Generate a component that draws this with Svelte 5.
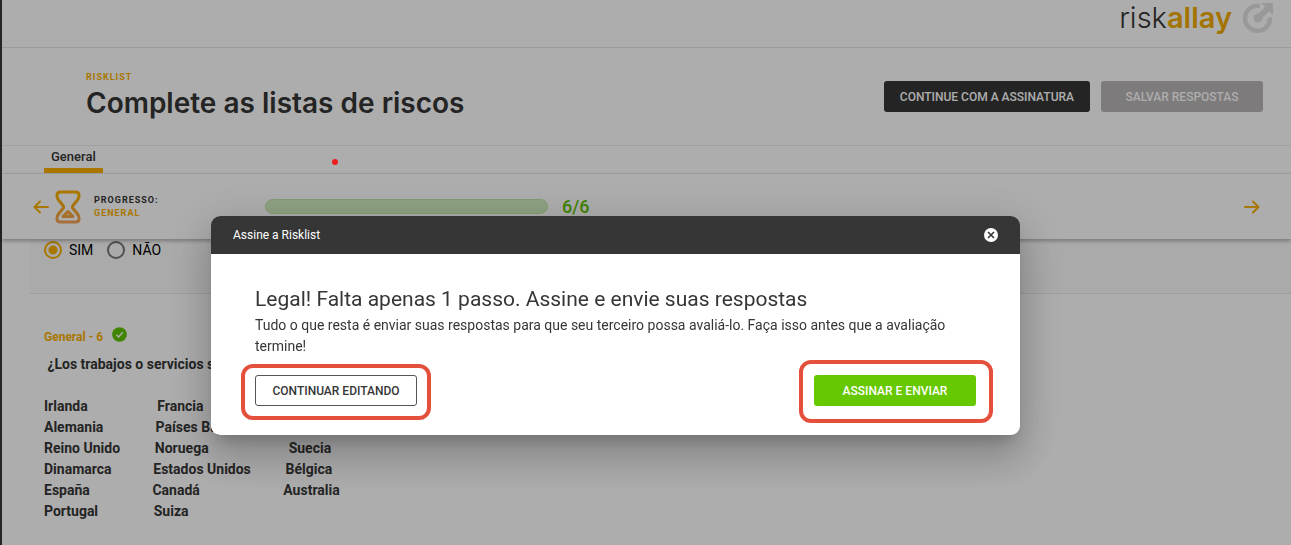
<script>
    let answer = $state("sim");
    let modalOpen = $state(true);

    // column spacing is part of the text, the way the question was typed in
    const gap = (n) => " ".repeat(n);
    const countries = [
        "Irlanda" + gap(20) + "Francia",
        "Alemania" + gap(15) + "Países Bajos",
        "Reino Unido" + gap(10) + "Noruega" + gap(23) + "Suecia",
        "Dinamarca" + gap(12) + "Estados Unidos" + gap(10) + "Bélgica",
        "España" + gap(18) + "Canadá" + gap(24) + "Australia",
        "Portugal" + gap(16) + "Suiza",
    ].join("\n");
</script>

<div class="page">
    <header class="topbar">
        <a class="logo" href="#home">
            <span>risk<b>allay</b></span>
            <svg width="32" height="32" viewBox="0 0 32 32" fill="none">
                <path
                    d="M18 4.100A12.500 12.500 0 1 0 28 15.500"
                    stroke="#e2e2e2"
                    stroke-width="4.500"
                />
                <path d="M19 1H31V13L27.200 9.200L19 17.400L14.800 13.200L23 5Z" fill="#e2e2e2" />
                <circle cx="16" cy="16" r="4.500" fill="#e2e2e2" />
            </svg>
        </a>
    </header>

    <section class="heading">
        <div>
            <div class="kicker">RISKLIST</div>
            <h1>Complete as listas de riscos</h1>
        </div>
        <div class="actions">
            <button class="btn dark">CONTINUE COM A ASSINATURA</button>
            <button class="btn muted">SALVAR RESPOSTAS</button>
        </div>
    </section>

    <nav class="tabs">
        <a class="tab" href="#general">General</a>
    </nav>

    <section class="progress">
        <button class="arrow" aria-label="Anterior">
            <svg width="16" height="14" viewBox="0 0 16 14">
                <path d="M15 7H2M7 1.500L1.500 7L7 12.500" />
            </svg>
        </button>
        <svg class="hourglass" width="26" height="34" viewBox="0 0 26 34">
            <defs>
                <linearGradient id="sand" x1="0" y1="0" x2="0" y2="34" gradientUnits="userSpaceOnUse">
                    <stop offset="0.2" stop-color="#f9b000" />
                    <stop offset="1" stop-color="#f6a05c" />
                </linearGradient>
            </defs>
            <path
                d="M5.500 2H20.500Q24 2 24 5V6Q24 8 22.500 10L18 15.500Q16.800 17 18 18.500L22.500 24Q24 26 24 28V29Q24 32 20.500 32H5.500Q2 32 2 29V28Q2 26 3.500 24L8 18.500Q9.200 17 8 15.500L3.500 10Q2 8 2 6V5Q2 2 5.500 2Z"
            />
            <path d="M13 21.500L18 26.500H8Z" />
        </svg>
        <div class="stage">
            <span>PROGRESSO:</span>
            <span class="stage-name">GENERAL</span>
        </div>
        <div class="bar"></div>
        <div class="count">6/6</div>
        <button class="arrow next" aria-label="Seguinte">
            <svg width="16" height="14" viewBox="0 0 16 14">
                <path d="M1 7H14M9 1.500L14.500 7L9 12.500" />
            </svg>
        </button>
    </section>

    <main>
        <div class="answers">
            <label>
                <input type="radio" name="answer" value="sim" bind:group={answer} />
                SIM
            </label>
            <label>
                <input type="radio" name="answer" value="nao" bind:group={answer} />
                NÃO
            </label>
        </div>

        <div class="question">
            <div class="question-id">
                General - 6
                <svg width="15" height="15" viewBox="0 0 15 15">
                    <circle cx="7.500" cy="7.500" r="7.300" fill="#5fc400" />
                    <path d="M4.300 7.700L6.600 10L10.800 5.300" />
                </svg>
            </div>
            <p>{" ¿Los trabajos o servicios se"}</p>
            <p class="countries">{countries}</p>
        </div>
    </main>
</div>

{#if modalOpen}
    <div class="overlay">
        <div class="modal" role="dialog" aria-labelledby="modal-title">
            <div class="modal-head">
                <span id="modal-title">Assine a Risklist</span>
                <button class="close" aria-label="Fechar" onclick={() => (modalOpen = false)}>
                    <svg width="14" height="14" viewBox="0 0 14 14">
                        <circle cx="7" cy="7" r="7" fill="#fff" />
                        <path d="M4 4L10 10M10 4L4 10" />
                    </svg>
                </button>
            </div>
            <div class="modal-body">
                <h2>Legal! Falta apenas 1 passo. Assine e envie suas respostas</h2>
                <p>
                    Tudo o que resta é enviar suas respostas para que seu terceiro possa avaliá-lo.
                    Faça isso antes que a avaliação termine!
                </p>
                <div class="modal-actions">
                    <div class="marked">
                        <button class="btn outline" onclick={() => (modalOpen = false)}>
                            CONTINUAR EDITANDO
                        </button>
                    </div>
                    <div class="marked tall">
                        <button class="btn green">ASSINAR E ENVIAR</button>
                    </div>
                </div>
            </div>
        </div>
    </div>
{/if}

<div class="pointer"></div>

<style>
    :global(body) {
        background: #fff;
        font-family: Roboto, "Liberation Sans", sans-serif;
        color: #363636;
        overflow: hidden;
    }

    .page {
        box-sizing: border-box;
        min-height: 100vh;
        border-left: 2px solid #363636;
    }

    .topbar {
        display: flex;
        justify-content: flex-end;
        height: 47px;
        padding-right: 17px;
        border-bottom: 1px solid #e4e4e4;
    }

    .logo {
        display: flex;
        gap: 10px;
        height: 36px;
        align-items: center;
        font: 300 29px/36px Inter, sans-serif;
        color: #363636;
        text-decoration: none;
    }

    .logo b {
        font-weight: 600;
        color: #f0ab00;
    }

    .heading {
        display: flex;
        justify-content: space-between;
        align-items: center;
        height: 97px;
        padding: 0 28px 0 84px;
        border-bottom: 1px solid #ececec;
    }

    .kicker {
        font-size: 9px;
        line-height: 12px;
        font-weight: 700;
        letter-spacing: 1px;
        color: #f9b000;
    }

    h1 {
        margin: 0;
        font: 600 28px/40px Inter, sans-serif;
    }

    .actions {
        display: flex;
        gap: 11px;
    }

    .btn {
        height: 31px;
        min-width: 162px;
        padding: 0 16px;
        border: 0;
        border-radius: 3px;
        font: 500 12px/16px Roboto, sans-serif;
        white-space: nowrap;
        cursor: pointer;
    }

    .dark {
        background: #363636;
        color: #fff;
    }

    .muted {
        background: #b9b5b6;
        color: #fff;
    }

    .tabs {
        display: flex;
        height: 27px;
        padding-left: 42px;
        border-bottom: 1px solid #ececec;
    }

    .tab {
        padding: 0 7px;
        border-bottom: 5px solid #f9b000;
        font-size: 13px;
        line-height: 21px;
        font-weight: 500;
        color: #363636;
        text-decoration: none;
    }

    .progress {
        position: relative;
        display: flex;
        align-items: center;
        height: 65px;
        padding: 0 31px;
        box-shadow: 0 2px 4px rgba(0, 0, 0, 0.3);
    }

    .arrow {
        display: flex;
        padding: 0;
        border: 0;
        background: none;
        cursor: pointer;
    }

    .arrow path {
        fill: none;
        stroke: #f9b000;
        stroke-width: 2;
        stroke-linecap: round;
        stroke-linejoin: round;
    }

    .next {
        margin-left: auto;
    }

    .hourglass {
        margin-left: 6px;
    }

    .hourglass path {
        fill: none;
        stroke: url(#sand);
        stroke-width: 3;
        stroke-linejoin: round;
    }

    .stage {
        display: flex;
        flex-direction: column;
        width: 171px;
        margin-left: 13px;
        font-size: 9px;
        line-height: 13px;
        font-weight: 700;
        letter-spacing: 1px;
    }

    .stage-name {
        color: #f9b000;
    }

    .bar {
        box-sizing: border-box;
        width: 283px;
        height: 15px;
        border: 1px solid #c0e4a6;
        border-radius: 8px;
        background: #d3eec0;
    }

    .count {
        margin-left: 14px;
        font-size: 18px;
        line-height: 20px;
        font-weight: 500;
        color: #5fc400;
    }

    main {
        padding-left: 28px;
    }

    .answers {
        display: flex;
        gap: 14px;
        height: 53px;
        padding: 1px 0 0 14px;
        border-bottom: 1px solid #e8e8e8;
        background: #fbfbfb;
    }

    .answers label {
        display: flex;
        align-items: center;
        gap: 7px;
        height: 20px;
        font-size: 14px;
        color: #000;
    }

    .answers input {
        appearance: none;
        width: 18px;
        height: 18px;
        margin: 0;
        border: 2px solid #777;
        border-radius: 50%;
    }

    .answers input:checked {
        border-color: #f9b000;
        background: radial-gradient(circle, #f9b000 4px, transparent 5px);
    }

    .question {
        padding: 33px 0 0 14px;
    }

    .question-id {
        display: flex;
        gap: 9px;
        font-size: 12px;
        line-height: 20px;
        font-weight: 700;
        color: #f9b000;
    }

    .question-id path {
        fill: none;
        stroke: #fff;
        stroke-width: 1.5;
    }

    .question p {
        margin: 7px 0 0;
        font-size: 14px;
        line-height: 21px;
        font-weight: 700;
        white-space: pre;
    }

    .question .countries {
        margin-top: 21px;
    }

    .overlay {
        position: fixed;
        inset: 0;
        padding: 216px 271px 0 211px;
        background: rgba(0, 0, 0, 0.32);
    }

    .modal {
        border-radius: 9px;
        overflow: hidden;
        background: #fff;
        box-shadow:
            0 11px 15px -7px rgba(0, 0, 0, 0.2),
            0 24px 38px 3px rgba(0, 0, 0, 0.14),
            0 9px 46px 8px rgba(0, 0, 0, 0.12);
    }

    .modal-head {
        display: flex;
        justify-content: space-between;
        align-items: center;
        height: 38px;
        padding: 0 22px;
        background: #363636;
        color: #fff;
        font-size: 12px;
    }

    .close {
        display: flex;
        padding: 0;
        border: 0;
        background: none;
        cursor: pointer;
    }

    .close path {
        stroke: #363636;
        stroke-width: 1.6;
    }

    .modal-body {
        padding: 31px 44px 29px;
    }

    h2 {
        margin: 0 0 2px;
        font-size: 21px;
        line-height: 28px;
        font-weight: 400;
    }

    .modal-body p {
        margin: 0;
        font-size: 14px;
        line-height: 21px;
    }

    .modal-actions {
        display: flex;
        justify-content: space-between;
        margin-top: 18px;
    }

    .outline {
        border: 1px solid #555;
        background: #fff;
        color: #363636;
    }

    .green {
        background: #66c800;
        color: #fff;
    }

    .marked {
        position: relative;
    }

    .marked::after {
        content: "";
        position: absolute;
        inset: -11px -14px -14px;
        border: 4px solid #e5503c;
        border-radius: 12px;
        pointer-events: none;
    }

    .tall::after {
        inset: -15px -17px -17px -15px;
    }

    .pointer {
        position: fixed;
        left: 332px;
        top: 159px;
        width: 6px;
        height: 6px;
        border-radius: 50%;
        background: #ee1c1c;
    }
</style>
